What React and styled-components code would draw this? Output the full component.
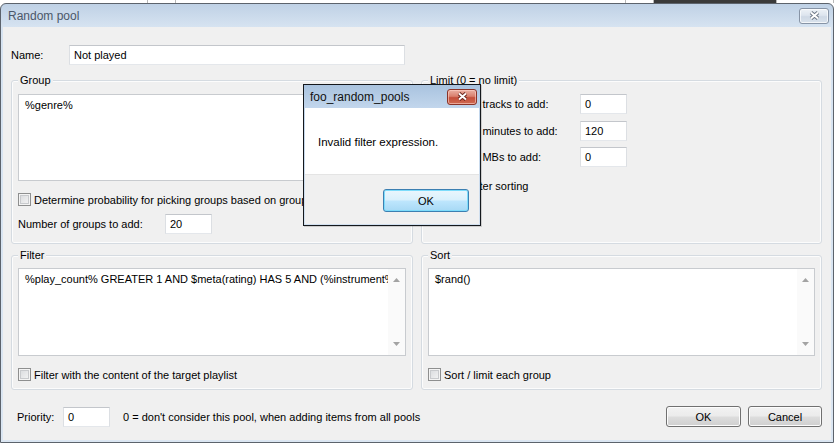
import React from 'react';
import styled, { createGlobalStyle } from 'styled-components';

const GlobalStyle = createGlobalStyle`
  html, body {
    margin: 0;
    padding: 0;
    background: #fff;
  }
  body {
    font-family: "Liberation Sans", Arial, sans-serif;
    font-size: 11px;
    color: #000;
  }
`;

const Screen = styled.div`
  position: relative;
  width: 834px;
  height: 443px;
  overflow: hidden;
  background: #fff;
`;

// a sliver of the window behind the dialog
const Backdrop = styled.div`
  display: flex;
  height: 3px;
  background: #fff;
`;

const BackdropCell = styled.div`
  width: ${(p) => p.$w}px;
  background: ${(p) => (p.$dark ? '#3a3a3a' : '#fff')};
  border-right: 1px solid #b8b8b8;
`;

const Window = styled.div`
  box-sizing: border-box;
  width: 834px;
  height: 440px;
  display: flex;
  flex-direction: column;
  border: 1px solid #5c636c;
  border-radius: 6px 6px 0 0;
  background: linear-gradient(#bfd1e5 0px, #d6e3f1 23px, #dbe6f2 100%);
  padding: 0 2px 2px;
`;

const TitleBar = styled.div`
  height: 23px;
  display: flex;
  align-items: center;
  justify-content: space-between;
  padding-left: 5px;
`;

const WindowTitle = styled.span`
  font-size: 12px;
  color: ${(p) => (p.$active ? '#111' : '#4b5769')};
`;

const CloseButton = styled.div`
  box-sizing: border-box;
  width: 30px;
  height: 16px;
  margin-right: 2px;
  display: flex;
  align-items: center;
  justify-content: center;
  border-radius: 3px;
  border: 1px solid ${(p) => (p.$red ? '#8a3328' : '#8794a6')};
  background: ${(p) =>
    p.$red
      ? 'linear-gradient(#eab1a4 0%, #d9806e 45%, #c44f3b 55%, #cf6a52 100%)'
      : 'linear-gradient(#eef2f7 0%, #dde5ee 45%, #cfd9e5 55%, #d9e2ec 100%)'};
  box-shadow: inset 0 0 0 1px ${(p) => (p.$red ? 'rgba(255,210,200,0.6)' : 'rgba(255,255,255,0.7)')};
`;

const CloseGlyph = ({ outline }) => (
  <svg width="11" height="9" viewBox="0 0 11 9">
    <path d="M2 1.5L9 7.5M9 1.5L2 7.5" stroke={outline} strokeWidth="3.8" fill="none" />
    <path d="M2 1.5L9 7.5M9 1.5L2 7.5" stroke="#fff" strokeWidth="1.9" fill="none" />
  </svg>
);

const Client = styled.div`
  flex: 1;
  display: flex;
  flex-direction: column;
  background: #f0f0f0;
  padding: 0 9px 0 8px;
`;

const FieldRow = styled.div`
  display: flex;
  align-items: center;
  height: 20px;
  margin-top: ${(p) => p.$top || 0}px;
`;

const FieldLabel = styled.span`
  width: ${(p) => p.$w}px;
  margin-left: ${(p) => p.$left || 0}px;
  flex-shrink: 0;
  white-space: nowrap;
`;

const TextInput = styled.div`
  box-sizing: border-box;
  width: ${(p) => p.$w}px;
  height: 20px;
  line-height: 18px;
  padding-left: 4px;
  background: #fff;
  border: 1px solid;
  border-color: #c3c6cb #dcdfe3 #e4e7eb #dcdfe3;
`;

const Columns = styled.div`
  display: grid;
  grid-template-columns: 402px 401px;
  column-gap: 8px;
  row-gap: 11px;
  margin-top: 15px;
`;

const GroupBox = styled.div`
  display: flex;
  flex-direction: column;
  min-width: 0;
  border: 1px solid #d5dbe1;
  border-radius: 3px;
  padding: 0 6px ${(p) => p.$bottom}px;
  box-shadow: inset 0 0 0 1px rgba(255, 255, 255, 0.8);
`;

const Caption = styled.div`
  align-self: flex-start;
  height: 15px;
  line-height: 15px;
  margin-top: -8px;
  padding: 0 2px;
  background: #f0f0f0;
  white-space: nowrap;
`;

const EditBox = styled.div`
  box-sizing: border-box;
  display: flex;
  height: ${(p) => p.$h}px;
  margin-top: ${(p) => p.$top}px;
  background: #fff;
  border: 1px solid #c8cbcf;
  overflow: hidden;
`;

const EditText = styled.div`
  flex: 1;
  min-width: 0;
  padding: 3px 6px;
  line-height: 14px;
  white-space: nowrap;
  overflow: hidden;
  text-overflow: clip;
`;

const ScrollBar = styled.div`
  width: 17px;
  flex-shrink: 0;
  display: flex;
  flex-direction: column;
  align-items: center;
  justify-content: space-between;
  padding: 9px 0;
  background: #fafafa;
`;

const ScrollArrow = ({ down }) => (
  <svg width="7" height="4" viewBox="0 0 7 4">
    <path d={down ? 'M0 0H7L3.5 4Z' : 'M0 4H7L3.5 0Z'} fill="#a3a3a3" />
  </svg>
);

const CheckRow = styled.div`
  display: flex;
  align-items: center;
  height: 15px;
  margin-top: 11px;
  white-space: nowrap;
`;

const CheckBox = styled.span`
  box-sizing: border-box;
  width: 13px;
  height: 13px;
  margin-right: 3px;
  flex-shrink: 0;
  border: 1px solid #8e8f8f;
  background: linear-gradient(135deg, #d6d8db 0%, #f7f7f7 100%);
  box-shadow: inset 0 0 0 1px #f4f4f4, inset 0 0 0 2px #c8cacd;
`;

const BottomBar = styled.div`
  display: flex;
  align-items: center;
  height: 21px;
  margin-top: 16px;
`;

const Hint = styled.span`
  margin-left: 13px;
  flex: 1;
  white-space: nowrap;
`;

const PushButton = styled.div`
  box-sizing: border-box;
  width: ${(p) => p.$w}px;
  height: ${(p) => p.$h || 21}px;
  margin-left: ${(p) => p.$gap || 0}px;
  display: flex;
  align-items: center;
  justify-content: center;
  border-radius: 3px;
  border: 1px solid ${(p) => (p.$focused ? '#3c7fb1' : '#707070')};
  background: ${(p) =>
    p.$focused
      ? 'linear-gradient(#eaf6fd 0%, #d9f0fc 48%, #bee6fd 52%, #a7d9f5 100%)'
      : 'linear-gradient(#f2f2f2 0%, #ebebeb 48%, #dddddd 52%, #cfcfcf 100%)'};
  box-shadow: inset 0 0 0 1px ${(p) => (p.$focused ? '#7ddcfb' : '#fcfcfc')};
`;

const MessageBox = styled.div`
  position: absolute;
  left: 303px;
  top: 84px;
  box-sizing: border-box;
  width: 178px;
  height: 142px;
  display: flex;
  flex-direction: column;
  border: 1px solid #14181d;
  background: linear-gradient(#a9c3df 0px, #c2d6ec 23px, #d2e0ef 100%);
  padding: 0 1px 1px;
  box-shadow: 1px 1px 0 rgba(0, 0, 0, 0.15);
`;

const MessageBody = styled.div`
  height: 66px;
  box-sizing: border-box;
  padding: 27px 0 0 13px;
  background: #fff;
  font-size: 11.5px;
  line-height: 14px;
`;

const MessageFooter = styled.div`
  flex: 1;
  display: flex;
  justify-content: flex-end;
  align-items: flex-start;
  padding: 14px 10px 0 0;
  background: #f0f0f0;
  border-top: 1px solid #e4e4e4;
`;

const limitRows = [
  { label: 'Number of tracks to add:', value: '0', top: 6 },
  { label: 'Number of minutes to add:', value: '120', top: 7 },
  { label: 'Number of MBs to add:', value: '0', top: 6 },
];

function ScriptEdit({ text, height, top, scroll }) {
  return (
    <EditBox $h={height} $top={top}>
      <EditText>{text}</EditText>
      {scroll && (
        <ScrollBar>
          <ScrollArrow />
          <ScrollArrow down />
        </ScrollBar>
      )}
    </EditBox>
  );
}

function Check({ label }) {
  return (
    <CheckRow>
      <CheckBox />
      {label}
    </CheckRow>
  );
}

export default function App() {
  return (
    <Screen>
      <GlobalStyle />
      <Backdrop>
        <BackdropCell $w={148} />
        <BackdropCell $w={27} />
        <BackdropCell $w={452} />
        <BackdropCell $w={27} />
        <BackdropCell $w={123} $dark />
        <BackdropCell $w={56} />
      </Backdrop>

      <Window>
        <TitleBar>
          <WindowTitle>Random pool</WindowTitle>
          <CloseButton>
            <CloseGlyph outline="#6d7785" />
          </CloseButton>
        </TitleBar>

        <Client>
          <FieldRow $top={18}>
            <FieldLabel $w={58}>Name:</FieldLabel>
            <TextInput $w={336}>Not played</TextInput>
          </FieldRow>

          <Columns>
            <GroupBox $bottom={9}>
              <Caption>Group</Caption>
              <ScriptEdit text="%genre%" height={87} top={6} />
              <Check label="Determine probability for picking groups based on group size" />
              <FieldRow $top={7}>
                <FieldLabel $w={147}>Number of groups to add:</FieldLabel>
                <TextInput $w={47}>20</TextInput>
              </FieldRow>
            </GroupBox>

            <GroupBox $bottom={9}>
              <Caption>Limit (0 = no limit)</Caption>
              {limitRows.map((row) => (
                <FieldRow key={row.label} $top={row.top}>
                  <FieldLabel $w={152}>{row.label}</FieldLabel>
                  <TextInput $w={47}>{row.value}</TextInput>
                </FieldRow>
              ))}
              <Check label="Limit after sorting" />
            </GroupBox>

            <GroupBox $bottom={7}>
              <Caption>Filter</Caption>
              <ScriptEdit
                text="%play_count% GREATER 1 AND $meta(rating) HAS 5 AND (%instrument%"
                height={88}
                top={5}
                scroll
              />
              <Check label="Filter with the content of the target playlist" />
            </GroupBox>

            <GroupBox $bottom={7}>
              <Caption>Sort</Caption>
              <ScriptEdit text="$rand()" height={88} top={5} scroll />
              <Check label="Sort / limit each group" />
            </GroupBox>
          </Columns>

          <BottomBar>
            <FieldLabel $w={46} $left={6}>Priority:</FieldLabel>
            <TextInput $w={47}>0</TextInput>
            <Hint>0 = don't consider this pool, when adding items from all pools</Hint>
            <PushButton $w={75}>OK</PushButton>
            <PushButton $w={74} $gap={7}>Cancel</PushButton>
          </BottomBar>
        </Client>
      </Window>

      <MessageBox>
        <TitleBar>
          <WindowTitle $active>foo_random_pools</WindowTitle>
          <CloseButton $red>
            <CloseGlyph outline="#6b231b" />
          </CloseButton>
        </TitleBar>
        <MessageBody>Invalid filter expression.</MessageBody>
        <MessageFooter>
          <PushButton $w={86} $h={23} $focused>OK</PushButton>
        </MessageFooter>
      </MessageBox>
    </Screen>
  );
}
